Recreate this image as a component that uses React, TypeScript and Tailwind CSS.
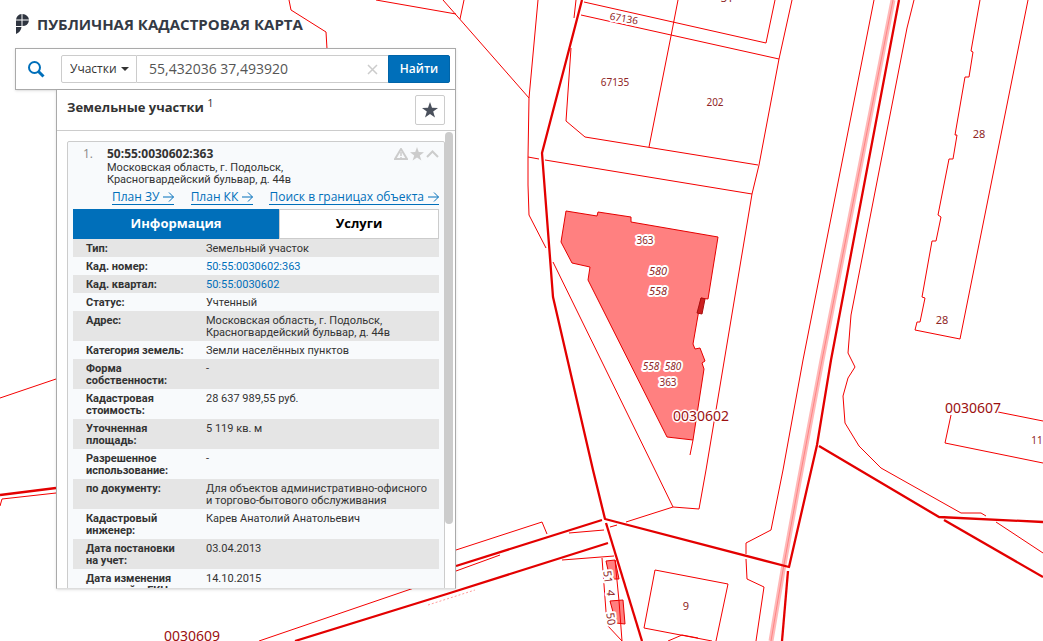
import { useState } from "react";

type Row = { label: string[]; value: string[]; isLink?: boolean };

const rows: Row[] = [
  { label: ["Тип:"], value: ["Земельный участок"] },
  { label: ["Кад. номер:"], value: ["50:55:0030602:363"], isLink: true },
  { label: ["Кад. квартал:"], value: ["50:55:0030602"], isLink: true },
  { label: ["Статус:"], value: ["Учтенный"] },
  { label: ["Адрес:"], value: ["Московская область, г. Подольск,", "Красногвардейский бульвар, д. 44в"] },
  { label: ["Категория земель:"], value: ["Земли населённых пунктов"] },
  { label: ["Форма", "собственности:"], value: ["-"] },
  { label: ["Кадастровая", "стоимость:"], value: ["28 637 989,55 руб."] },
  { label: ["Уточненная", "площадь:"], value: ["5 119 кв. м"] },
  { label: ["Разрешенное", "использование:"], value: ["-"] },
  { label: ["по документу:"], value: ["Для объектов административно-офисного", "и торгово-бытового обслуживания"] },
  { label: ["Кадастровый", "инженер:"], value: ["Карев Анатолий Анатольевич"] },
  { label: ["Дата постановки", "на учет:"], value: ["03.04.2013"] },
  { label: ["Дата изменения", "сведений в ГКН:"], value: ["14.10.2015"] },
];

// parcel borders
const parcels = [
  "M289 0L291 10L326 32L327 49",
  "M376 0L456 14",
  "M443 0L529 98L528 157L528 185L529 215L546 248",
  "M553 262L655 470L673 507L699 509L706 470L752 194L759 165L779 59L792 0",
  "M464 0L460 19",
  "M538 0L529 98",
  "M576 0L574 18",
  "M571 48L566 121L585 137L758 165",
  "M584 2L766 43L775 0",
  "M581 15L779 59",
  "M678 0L671 36L649 147",
  "M528 157L539 159",
  "M545 160L752 194",
  "M874 0L803 360L783 470L771 530L746 543L746 554",
  "M746 559L747 579L764 587L756 641",
  "M914 0L907 28L851 315L848 353L855 367L848 378L843 396L845 423L859 446L881 468L961 513L981 513L986 516",
  "M996 522L1043 553",
  "M980 0L971 51L973 52L969 77L965 77L955 135L957 135L953 159L949 159L938 215L941 217L936 241L932 241L922 297L925 298L920 322L917 322L915 330L960 339L1028 0",
  "M951 415L945 443L1043 463",
  "M998 412L1043 421",
  "M456 550L542 522L547 534",
  "M259 641L414 588L456 571L500 555",
  "M569 533L604 530",
  "M610 527L617 525",
  "M626 522L673 507",
  "M562 560L614 556",
  "M602 558L607 625L622 641",
  "M615 560L619 601L622 641",
  "M655 570L728 584L716 641",
  "M655 570L644 628L712 641",
  "M668 641L682 635L698 638",
  "M0 398L56 379",
  "M0 506L2 499L56 493",
  "M693 440L690 455",
];

// cadastral quarter borders
const quarters = [
  "M582 0L542 153L553 297L593 470L605 519L789 567L817 445L831 360L899 0",
  "M819 446L939 517L1043 522",
  "M944 520L1043 577",
  "M606 523L642 641",
  "M602 520L456 566",
  "M608 543L450 593L295 641",
  "M788 571L782 641",
  "M0 495L56 488",
];

const road = "M893 0L822 360L799 482L783 570L771 641";

const Map = () => (
  <svg
    className="absolute inset-0 h-full w-full"
    viewBox="0 0 1043 641"
    preserveAspectRatio="xMidYMid slice"
    fill="none"
    aria-hidden="true"
  >
    <path d={road} stroke="#ffb9b9" strokeWidth="5" />
    <path d={road} stroke="#ff8484" strokeWidth="1" />
    <path
      d="M566 211L597 216L598 212L631 217L631 222L718 237L708 299L701 298L693 344L695 349L700 348L705 361L702 363L704 369L693 440L667 437L588 280L590 267L572 263L561 242Z"
      fill="#ff8080"
      stroke="#e60000"
    />
    <path d="M701 298L705 299L702 314L697 313Z" fill="#cc1f1f" stroke="#a81010" />
    <path d="M606 561L615 560L619 579L610 579Z M610 601L623 600L625 624L616 623Z" fill="#ff8080" stroke="#e60000" />
    <g stroke="#f40000">
      {parcels.map((d) => (
        <path key={d} d={d} />
      ))}
    </g>
    <path d="M428 605L475 590" stroke="#ff9c9c" strokeDasharray="2 2" />
    <g stroke="#e30000" strokeWidth="2.3" strokeLinejoin="round">
      {quarters.map((d) => (
        <path key={d} d={d} />
      ))}
    </g>
    <g
      fill="#8f2626"
      stroke="#fff"
      strokeWidth="4"
      strokeLinejoin="round"
      paintOrder="stroke"
      textAnchor="middle"
      fontSize="11"
      fontFamily="'Noto Sans', sans-serif"
    >
      <text x="727" y="2">31</text>
      <text x="624" y="22" fontSize="10" transform="rotate(10 624 18)">67136</text>
      <text x="615" y="86" fontSize="10">67135</text>
      <text x="715" y="106" fontSize="10">202</text>
      <text x="979" y="138">28</text>
      <text x="942" y="324">28</text>
      <text x="1037" y="444" fontSize="10">11</text>
      <text x="686" y="610">9</text>
      <text x="645" y="244" fontSize="10">363</text>
      <text x="668" y="386" fontSize="10">363</text>
      <g fontStyle="italic">
        <text x="658" y="275">580</text>
        <text x="658" y="295">558</text>
        <text x="651" y="370" fontSize="10">558</text>
        <text x="673" y="370" fontSize="10">580</text>
      </g>
      <text x="608" y="581" transform="rotate(82 608 577)">51</text>
      <text x="611" y="597" transform="rotate(95 611 593)">4</text>
      <text x="611" y="623" transform="rotate(82 611 619)">50</text>
      <g fill="#9c1010" fontSize="14" strokeWidth="3">
        <text x="701" y="421">0030602</text>
        <text x="973" y="413">0030607</text>
        <text x="192" y="641">0030609</text>
      </g>
    </g>
  </svg>
);

const Logo = () => (
  <svg className="h-5 w-[14px] shrink-0" viewBox="0 0 14 20" fill="#2f3540" aria-hidden="true">
    <path d="M6.500 0v5.500H1Q2 .5 6.500 0ZM7.500 0Q13 .5 14 5.500H7.500ZM1 6.500h5.500V12H1ZM7.500 6.500H14Q13 12 7.500 12ZM1 13h5.500Q6 18 1 20Z" />
  </svg>
);

const Star = ({ className }: { className: string }) => (
  <svg className={className} viewBox="0 0 16 16" fill="currentColor" aria-hidden="true">
    <path d="M8 0l2 5.700 6 .2-4.800 3.700L13 15.500l-5-3.500-5 3.500 1.800-5.900L0 5.900l6-.2z" />
  </svg>
);

const ArrowLink = ({ text }: { text: string }) => (
  <a href="#" className="flex items-center gap-1 whitespace-nowrap border-b border-[#006fba] leading-[14px]">
    {text}
    <svg className="h-[10px] w-[11px]" viewBox="0 0 11 10" fill="none" stroke="currentColor" aria-hidden="true">
      <path d="M0 5h10.500M6 .5L10.500 5 6 9.500" />
    </svg>
  </a>
);

const App = () => {
  const [query, setQuery] = useState("55,432036 37,493920");
  const [tab, setTab] = useState(0);

  return (
    <div className="relative flex h-screen w-full flex-col overflow-hidden bg-white pb-[52px] font-['Open_Sans',sans-serif] text-[#333]">
      <Map />
      <header className="relative flex h-12 shrink-0 items-center gap-2 pl-[15px]">
        <Logo />
        <h1 className="whitespace-nowrap text-[15px] font-bold text-[#343a45]">ПУБЛИЧНАЯ КАДАСТРОВАЯ КАРТА</h1>
      </header>
      <main className="relative flex min-h-0 w-[456px] flex-1 flex-col pl-[15px]">
        <form
          className="flex h-[42px] shrink-0 items-center border border-[#aaa] bg-white pr-[5px] shadow-sm"
          onSubmit={(e) => e.preventDefault()}
        >
          <label htmlFor="query" aria-label="Поиск" className="flex w-[45px] shrink-0 pl-3 text-[#006fba]">
            <svg className="h-[17px] w-[17px]" viewBox="0 0 17 17" fill="none" stroke="currentColor" aria-hidden="true">
              <circle cx="6.500" cy="6.500" r="5.500" strokeWidth="2" />
              <path d="M10.500 10.500l5 5" strokeWidth="3" />
            </svg>
          </label>
          <div className="relative h-7 w-[76px] shrink-0">
            <select
              aria-label="Тип объекта"
              className="h-full w-full appearance-none rounded-l-xs border border-[#ccc] pl-2 text-xs text-[#333]"
            >
              <option>Участки</option>
            </select>
            <svg className="pointer-events-none absolute right-2 top-3 h-1 w-2" viewBox="0 0 8 4" fill="#333" aria-hidden="true">
              <path d="M0 0h8L4 4z" />
            </svg>
          </div>
          <div className="flex h-7 min-w-0 flex-1 items-center border-y border-[#ccc] pl-3 pr-[10px]">
            <input
              id="query"
              className="min-w-0 flex-1 bg-transparent text-sm text-[#555] outline-none"
              value={query}
              onChange={(e) => setQuery(e.target.value)}
            />
            <button type="button" aria-label="Очистить" className="text-[#ccc]" onClick={() => setQuery("")}>
              <svg className="h-[11px] w-[11px]" viewBox="0 0 11 11" stroke="currentColor" aria-hidden="true">
                <path d="M1 1l9 9M10 1l-9 9" strokeWidth="1.500" />
              </svg>
            </button>
          </div>
          <button className="h-7 w-[62px] rounded-r-xs border border-[#0064a8] bg-[#006fba] text-xs font-semibold text-white">
            Найти
          </button>
        </form>

        <section className="ml-[41px] flex min-h-0 flex-1 flex-col border border-t-0 border-[#aaa] border-b-[#ddd] bg-white shadow-sm">
          <div className="flex h-[41px] shrink-0 items-center justify-between border-b border-[#ccc] px-[10px]">
            <h2 className="pb-1 text-[13px] font-bold">
              Земельные участки <sup className="text-[11px] font-normal">1</sup>
            </h2>
            <button
              aria-label="Избранное"
              className="flex h-[30px] w-[30px] items-center justify-center rounded-xs border border-[#ccc] text-[#4a505c]"
            >
              <Star className="h-4 w-4" />
            </button>
          </div>

          <div className="flex min-h-0 flex-1 pl-[10px] pr-[2px]">
            <div className="min-w-0 flex-1 overflow-hidden pt-[10px]">
              <article className="rounded-t-xs border border-[#ccc] bg-[#f8fafc] px-[5px] pt-[5px]">
                <div className="flex pl-[10px]">
                  <span className="w-6 shrink-0 text-xs leading-[14px] text-[#888]">1.</span>
                  <div className="flex-1 font-['Roboto',sans-serif] text-[11px] leading-[12px]">
                    <h3 className="mb-px font-['Open_Sans',sans-serif] text-xs font-bold leading-[14px]">50:55:0030602:363</h3>
                    <p>Московская область, г. Подольск,</p>
                    <p>Красногвардейский бульвар, д. 44в</p>
                  </div>
                  <div className="flex h-[14px] items-center gap-[2px] text-[#ccc]">
                    <svg className="h-3 w-[14px]" viewBox="0 0 14 12" fill="none" stroke="currentColor" aria-hidden="true">
                      <path d="M7 1L13 11H1z" strokeWidth="2" />
                      <path d="M7 4v4M7 9v1" strokeWidth="1.500" />
                    </svg>
                    <Star className="h-[14px] w-[14px]" />
                    <svg className="h-[13px] w-[13px]" viewBox="0 0 13 13" fill="none" stroke="currentColor" aria-hidden="true">
                      <path d="M1 9l5.500-5.500L12 9" strokeWidth="2" />
                    </svg>
                  </div>
                </div>
                <nav className="flex justify-between pb-1 pl-[39px] pt-1 text-xs text-[#006fba]">
                  <ArrowLink text="План ЗУ" />
                  <ArrowLink text="План КК" />
                  <ArrowLink text="Поиск в границах объекта" />
                </nav>
                <div className="flex h-[30px] text-[13px] font-bold">
                  {["Информация", "Услуги"].map((name, index) => (
                    <button
                      key={name}
                      onClick={() => setTab(index)}
                      className={
                        (index === 0 ? "w-[206px] " : "flex-1 ") +
                        (tab === index ? "bg-[#006fba] text-white" : "border border-[#ccc] bg-white text-black")
                      }
                    >
                      {name}
                    </button>
                  ))}
                </div>
                <table className="w-full font-['Roboto',sans-serif] text-[11px] leading-[12px]">
                  <tbody>
                    {rows.map((row, index) => (
                      <tr key={index} className="align-top odd:bg-[#e5e5e5]">
                        <th className="w-[133px] pb-[2px] pl-[13px] pt-1 text-left font-bold">
                          {row.label.map((line) => (
                            <div key={line} className="whitespace-nowrap">{line}</div>
                          ))}
                        </th>
                        <td className="pb-[2px] pt-1">
                          {row.value.map((line) => (
                            <div key={line} className="whitespace-nowrap">
                              {row.isLink ? <a href="#" className="text-[#006fba]">{line}</a> : line}
                            </div>
                          ))}
                        </td>
                      </tr>
                    ))}
                  </tbody>
                </table>
              </article>
            </div>
            <div className="w-2 shrink-0 pt-px">
              <div className="h-[86%] w-full rounded-full bg-[#ccc]" />
            </div>
          </div>
        </section>
      </main>
    </div>
  );
};

export default App;
